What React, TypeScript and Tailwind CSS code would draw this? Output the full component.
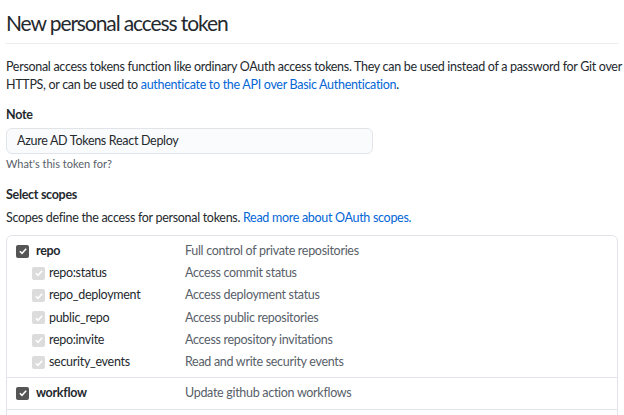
const subScopes = [
  { name: "repo:status", desc: "Access commit status" },
  { name: "repo_deployment", desc: "Access deployment status" },
  { name: "public_repo", desc: "Access public repositories" },
  { name: "repo:invite", desc: "Access repository invitations" },
  { name: "security_events", desc: "Read and write security events" },
];

function Check({ disabled }: { disabled?: boolean }) {
  return (
    <span
      className={
        "flex items-center justify-center w-[13px] h-[13px] rounded-[2px] shrink-0 " +
        (disabled ? "bg-[#dcdcdc]" : "bg-[#555]")
      }
    >
      <svg viewBox="0 0 12 12" className="w-[10px] h-[10px]">
        <path d="M2.2 6.3 L4.8 8.8 L9.8 3.2" fill="none" stroke="#fff" strokeWidth="1.8" />
      </svg>
    </span>
  );
}

export default function App() {
  return (
    <div className="w-[624px] h-[415px] overflow-hidden bg-white px-[6px] text-[12.5px] tracking-[-0.3px] text-[#24292e] font-['Lato',sans-serif]">
      {/* 제목 */}
      <h1 className="pt-[9px] pb-[6px] text-[21px] tracking-[-1.1px] leading-[28px] font-normal border-b border-[#eaecef]">
        New personal access token
      </h1>
      <p className="mt-[14px] leading-[18px]">
        <span className="block whitespace-nowrap">
          Personal access tokens function like ordinary OAuth access tokens. They can be used instead of a password for Git over
        </span>
        <span className="block whitespace-nowrap">
          HTTPS, or can be used to <span className="text-[#0366d6]">authenticate to the API over Basic Authentication</span>.
        </span>
      </p>

      {/* 노트 */}
      <div className="mt-[12px] font-bold leading-[18px]">Note</div>
      <div className="mt-[4px] w-[367px] h-[26px] flex items-center px-[10px] bg-[#fafbfc] border border-[#e1e4e8] rounded-[6px]">
        Azure AD Tokens React Deploy
      </div>
      <div className="mt-[2px] text-[11px] tracking-normal leading-[16px] text-[#586069]">What's this token for?</div>

      {/* 스코프 */}
      <div className="mt-[14px] font-bold leading-[18px]">Select scopes</div>
      <p className="mt-[5px] leading-[18px]">
        Scopes define the access for personal tokens.{" "}
        <span className="text-[#0366d6]">Read more about OAuth scopes.</span>
      </p>

      <div className="mt-[8px] border border-[#e1e4e8] rounded-[6px]">
        <div className="pt-[4px] pb-[3px]">
          <div className="flex items-center h-[22px]">
            <div className="flex items-center gap-[7px] w-[178px] pl-[9px]">
              <Check />
              <span className="font-bold">repo</span>
            </div>
            <span className="text-[#586069]">Full control of private repositories</span>
          </div>
          {subScopes.map((s) => (
            <div key={s.name} className="flex items-center h-[22.4px]">
              <div className="flex items-center gap-[4px] w-[178px] pl-[25px]">
                <Check disabled />
                <span>{s.name}</span>
              </div>
              <span className="text-[#586069]">{s.desc}</span>
            </div>
          ))}
        </div>
        <div className="border-t border-[#e1e4e8] h-[32px] flex items-center">
          <div className="flex items-center gap-[7px] w-[178px] pl-[9px]">
            <Check />
            <span className="font-bold">workflow</span>
          </div>
          <span className="text-[#586069]">Update github action workflows</span>
        </div>
        <div className="border-t border-[#e1e4e8] h-[32px]" />
      </div>
    </div>
  );
}
